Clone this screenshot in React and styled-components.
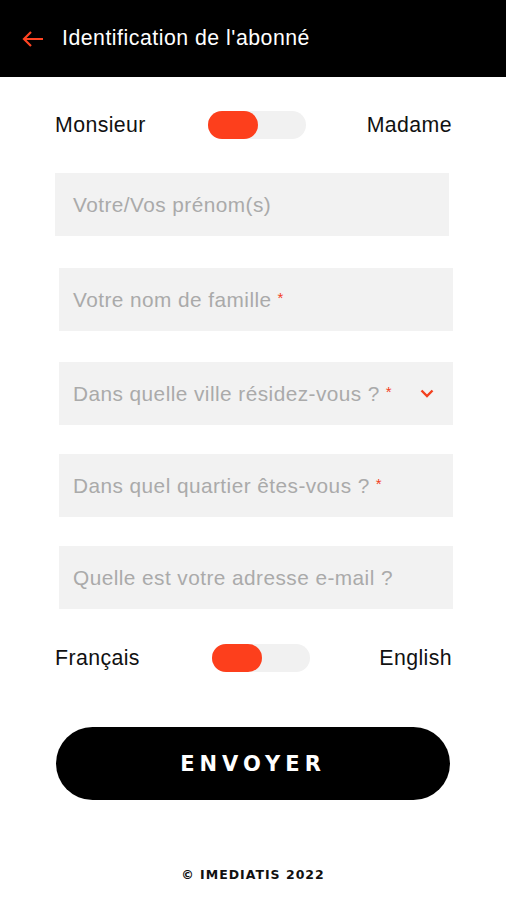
import React, { useState } from "react";
import styled, { createGlobalStyle } from "styled-components";

const GlobalStyle = createGlobalStyle`
  body {
    margin: 0;
    background: #fff;
    font-family: "Liberation Sans", Arial, sans-serif;
  }
`;

const Page = styled.div`
  width: 506px;
  min-height: 900px;
  display: flex;
  flex-direction: column;
`;

const Header = styled.header`
  height: 77px;
  background: #000;
  display: flex;
  align-items: center;
  padding: 0 0 0 22px;
  gap: 18px;
  box-sizing: border-box;
`;

const Title = styled.h1`
  margin: 0;
  color: #fff;
  font-size: 21.3px;
  font-weight: 400;
  letter-spacing: 0.5px;
`;

const Form = styled.form`
  display: flex;
  flex-direction: column;
  padding: 34px 57px 0 55px;
`;

const ToggleRow = styled.div`
  display: grid;
  grid-template-columns: ${(p) => p.$label}px 98px 1fr;
  align-items: center;
  height: 28px;
  margin-right: -3px;
  font-size: 21.3px;
  letter-spacing: 0.4px;
  color: #111;
  margin-top: ${(p) => p.$top || 0}px;
`;

const RightLabel = styled.span`
  justify-self: end;
`;

const Track = styled.button`
  position: relative;
  width: 98px;
  height: 28px;
  border: none;
  border-radius: 14px;
  background: #f1f1f1;
  padding: 0;
  cursor: pointer;
`;

const Thumb = styled.span`
  position: absolute;
  top: 0;
  left: ${(p) => (p.$on ? 48 : 0)}px;
  width: 50px;
  height: 28px;
  border-radius: 14px;
  background: #fd3f1c;
  transition: left 0.2s;
`;

const Field = styled.div`
  height: 63px;
  background: #f2f2f2;
  display: flex;
  align-items: center;
  padding: 0 19px 0 ${(p) => 18 - (p.$shift || 0)}px;
  margin-top: ${(p) => p.$top}px;
  margin-left: ${(p) => p.$shift || 0}px;
  margin-right: ${(p) => -(p.$shift || 0)}px;
  font-size: 20.8px;
  letter-spacing: 0.45px;
  color: #aaa;
`;

const Placeholder = styled.span`
  flex: 1;
`;

const Star = styled.span`
  color: #f2401f;
  font-size: 15px;
  vertical-align: 4px;
  margin-left: 6px;
`;

const SendButton = styled.button`
  margin: 55px -1px 0 1px;
  height: 73px;
  border: none;
  border-radius: 37px;
  background: #000;
  color: #fff;
  font-family: "DejaVu Sans", sans-serif;
  font-size: 21px;
  font-weight: 700;
  letter-spacing: 5px;
  cursor: pointer;
`;

const Footer = styled.footer`
  margin-top: 67px;
  text-align: center;
  font-family: "DejaVu Sans", sans-serif;
  font-size: 12.5px;
  font-weight: 700;
  letter-spacing: 1px;
  color: #111;
`;

const Arrow = () => (
  <svg width="22" height="16" viewBox="0 0 22 16" fill="none">
    <path d="M21 8H2M9 1L2 8l7 7" stroke="#ff4422" strokeWidth="2.2" />
  </svg>
);

const Chevron = () => (
  <svg width="14" height="9" viewBox="0 0 14 9" fill="none">
    <path d="M1.5 1.5L7 7l5.5-5.5" stroke="#f2401f" strokeWidth="2.4" />
  </svg>
);

const Toggle = () => {
  const [on, setOn] = useState(false);
  return (
    <Track type="button" onClick={() => setOn(!on)}>
      <Thumb $on={on} />
    </Track>
  );
};

const fields = [
  { text: "Votre/Vos prénom(s)", top: 34 },
  { text: "Votre nom de famille", required: true, top: 32, shift: 4 },
  { text: "Dans quelle ville résidez-vous ?", required: true, select: true, top: 31, shift: 4 },
  { text: "Dans quel quartier êtes-vous ?", required: true, top: 29, shift: 4 },
  { text: "Quelle est votre adresse e-mail ?", top: 29, shift: 4 },
];

export default function App() {
  return (
    <Page>
      <GlobalStyle />
      <Header>
        <Arrow />
        <Title>Identification de l'abonné</Title>
      </Header>
      <Form onSubmit={(e) => e.preventDefault()}>
        <ToggleRow $label={153}>
          <span>Monsieur</span>
          <Toggle />
          <RightLabel>Madame</RightLabel>
        </ToggleRow>
        {fields.map((f) => (
          <Field key={f.text} $top={f.top} $shift={f.shift}>
            <Placeholder>
              {f.text}
              {f.required && <Star>*</Star>}
            </Placeholder>
            {f.select && <Chevron />}
          </Field>
        ))}
        <ToggleRow $top={35} $label={157}>
          <span>Français</span>
          <Toggle />
          <RightLabel>English</RightLabel>
        </ToggleRow>
        <SendButton type="submit">ENVOYER</SendButton>
      </Form>
      <Footer>© IMEDIATIS 2022</Footer>
    </Page>
  );
}
